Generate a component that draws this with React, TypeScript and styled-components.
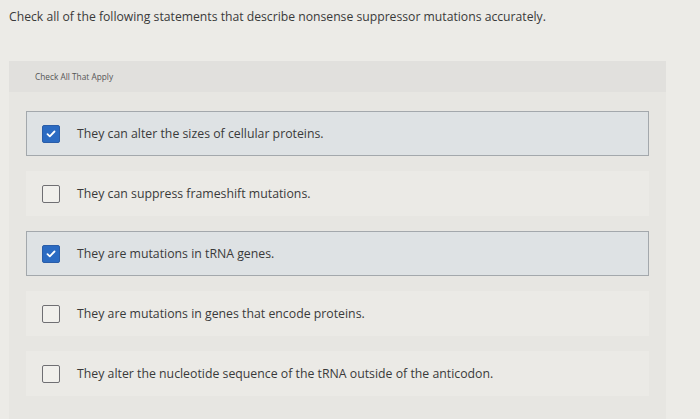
import styled, { createGlobalStyle } from "styled-components";

const GlobalStyle = createGlobalStyle`
  html, body {
    margin: 0;
    padding: 0;
    background: #ecebe7;
  }
  body {
    font-family: "Open Sans", Lato, sans-serif;
    color: #3b3b3b;
  }
`;

const Page = styled.div`
  width: 700px;
  height: 419px;
  overflow: hidden;
  padding: 9px 0 0 9px;
  box-sizing: border-box;
`;

const Question = styled.p`
  margin: 0;
  font-size: 12.2px;
  line-height: 16px;
  color: #3a3a3a;
`;

const Panel = styled.div`
  margin-top: 36px;
  width: 657px;
  height: 358px;
  background: #e7e6e2;
`;

const PanelHeader = styled.div`
  height: 31px;
  display: flex;
  align-items: center;
  padding-left: 26px;
  background: #e1e0dd;
  font-size: 8.3px;
  color: #555;
`;

const OptionList = styled.div`
  display: flex;
  flex-direction: column;
  gap: 15px;
  padding: 19px 17px 0 17px;
`;

const Option = styled.label<{ $checked: boolean }>`
  display: flex;
  align-items: center;
  height: 45px;
  box-sizing: border-box;
  padding-left: 15px;
  gap: 17px;
  border: 1px solid ${(p) => (p.$checked ? "#a3a8ac" : "transparent")};
  background: ${(p) => (p.$checked ? "#dee2e4" : "#ebeae6")};
  font-size: 12.3px;
  color: #3a3a3a;
`;

const Box = styled.span<{ $checked: boolean }>`
  width: 18px;
  height: 18px;
  box-sizing: border-box;
  border-radius: 2px;
  flex-shrink: 0;
  display: flex;
  align-items: center;
  justify-content: center;
  background: ${(p) => (p.$checked ? "#2b6bc2" : "#f1f0ec")};
  border: ${(p) => (p.$checked ? "1px solid #2a5da8" : "1.5px solid #6f6f73")};
`;

const options = [
  { text: "They can alter the sizes of cellular proteins.", checked: true },
  { text: "They can suppress frameshift mutations.", checked: false },
  { text: "They are mutations in tRNA genes.", checked: true },
  { text: "They are mutations in genes that encode proteins.", checked: false },
  { text: "They alter the nucleotide sequence of the tRNA outside of the anticodon.", checked: false },
];

export default function App() {
  return (
    <>
      <GlobalStyle />
      <Page>
        <Question>
          Check all of the following statements that describe nonsense suppressor mutations accurately.
        </Question>
        <Panel>
          <PanelHeader>Check All That Apply</PanelHeader>
          <OptionList>
            {options.map((o) => (
              <Option key={o.text} $checked={o.checked}>
                <Box $checked={o.checked}>
                  {o.checked && (
                    <svg width="10" height="8" viewBox="0 0 10 8">
                      <path d="M1.5 4.2 L3.8 6.3 L8.5 1.5" fill="none" stroke="#fff" strokeWidth="1.8" strokeLinecap="round" strokeLinejoin="round" />
                    </svg>
                  )}
                </Box>
                {o.text}
              </Option>
            ))}
          </OptionList>
        </Panel>
      </Page>
    </>
  );
}
